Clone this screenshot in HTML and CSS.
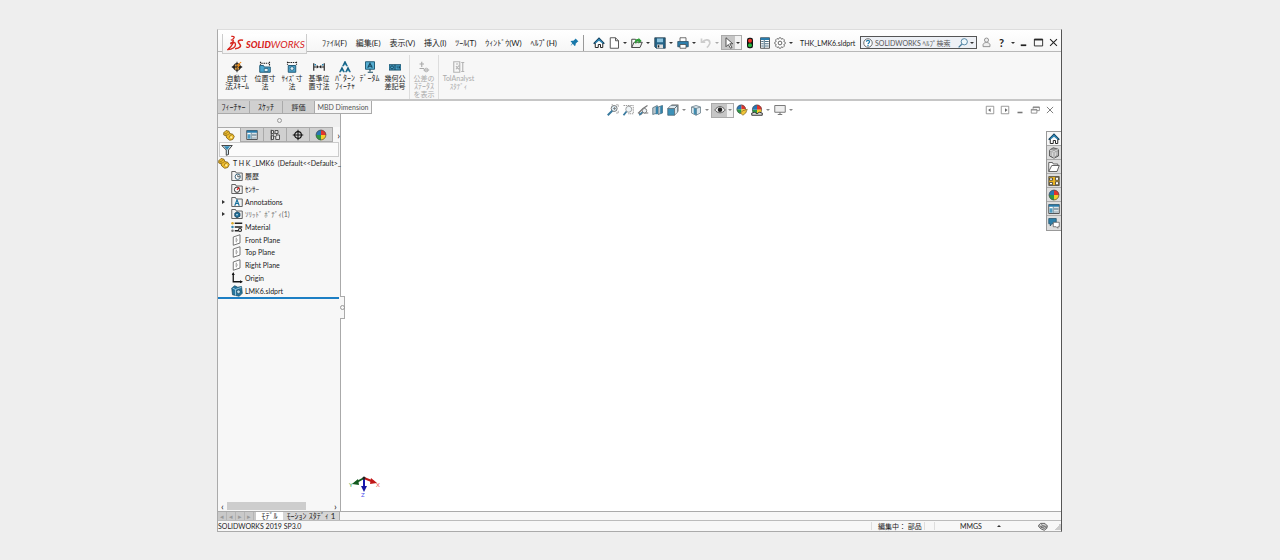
FILE: index.html
```html
<!DOCTYPE html>
<html lang="ja">
<head>
<meta charset="utf-8">
<title>SOLIDWORKS - THK_LMK6.sldprt</title>
<link rel="stylesheet" href="styles.css">
</head>
<body>
<svg class="defs" aria-hidden="true">
  <symbol id="home" viewBox="0 0 16 16"><path d="M3 8v6h4v-4h3v4h3V8" fill="#fff" stroke="#222" stroke-width="1.3"/><path d="M1 9l7-7 7 7" fill="none" stroke="#123f5c" stroke-width="2.2"/><path d="M3 7l5-5 5 5v2L8 5 3 9z" fill="#2d86b5"/></symbol>
  <symbol id="doc" viewBox="0 0 16 16"><path d="M3 1h7l4 4v10H3zM10 1v4h4" fill="#fff" stroke="#555" stroke-width="1.3"/></symbol>
  <symbol id="open" viewBox="0 0 16 16"><path d="M1 14V3h5l1 2h5v3" fill="#fff" stroke="#444" stroke-width="1.3"/><path d="M1 14l3-7h11l-3 7z" fill="#eee" stroke="#444" stroke-width="1.3"/><path d="M5 8c0-4 2-6 5-5V1l4 4-4 4V6C8 5 7 6 7 9z" fill="#2c9c36"/></symbol>
  <symbol id="folder" viewBox="0 0 16 16"><path d="M1 14V2h5l1 2h6v3" fill="#fff" stroke="#555" stroke-width="1.2"/><path d="M1 14l4-8h10l-3 8z" fill="#fff" stroke="#555" stroke-width="1.2"/></symbol>
  <symbol id="save" viewBox="0 0 16 16"><path d="M1 1h14v14H3l-2-2z" fill="#246387" stroke="#263b4a"/><path d="M4 2h8v5H4z" fill="#8ec4df"/><path d="M4 10h8v5H4z" fill="#ddd"/><path d="M5 11h2v3H5z" fill="#222"/></symbol>
  <symbol id="print" viewBox="0 0 16 16"><path d="M4 6V1h8v5" fill="#fff" stroke="#444"/><path d="M1 6h14v7H1z" fill="#2e7eab" stroke="#244a60"/><path d="M4 10h8v5H4z" fill="#fff" stroke="#444"/></symbol>
  <symbol id="undo" viewBox="0 0 16 16"><path d="M2 2v5h5M3 7c4-5 11-4 10 2-1 2-2 4-4 5" fill="none" stroke="#ccc" stroke-width="2.2"/></symbol>
  <symbol id="cursor" viewBox="0 0 16 16"><path d="M4 1v12l3-3 3 5 2-1-3-5h4z" fill="#fff" stroke="#444" stroke-width="1.2"/></symbol>
  <symbol id="light" viewBox="0 0 16 16"><rect x="4" y="1" width="8" height="14" rx="3" fill="#111"/><circle cx="8" cy="5" r="2.7" fill="#ee3527"/><circle cx="8" cy="11" r="2.7" fill="#24b33c"/></symbol>
  <symbol id="list" viewBox="0 0 16 16"><path d="M2 1h12v14H2z" fill="#fff" stroke="#444" stroke-width="1.2"/><path d="M2 1h12v3H2z" fill="#287bab"/><path d="M3 6h3M3 9h3M3 12h3M8 6h5M8 9h5M8 12h5M7 4v11" stroke="#3b6075" stroke-width="1.2"/></symbol>
  <symbol id="table" viewBox="0 0 16 16"><path d="M1 2h14v12H1z" fill="#fff" stroke="#444" stroke-width="1.2"/><path d="M1 2h14v3H1z" fill="#287bab"/><path d="M2 7h4v6H2z" fill="#4d9cc2"/><path d="M8 7h6M8 9h6M8 12h6M7 5v9" stroke="#3b6075"/></symbol>
  <symbol id="gear" viewBox="0 0 16 16"><path d="M7 1h2l1 2 2-1 2 2-1 2 2 1v2l-2 1 1 2-2 2-2-1-1 2H7l-1-2-2 1-2-2 1-2-2-1V7l2-1-1-2 2-2 2 1z" fill="#fff" stroke="#666" stroke-width="1.2"/><circle cx="8" cy="8" r="2.5" fill="none" stroke="#555" stroke-width="1.2"/></symbol>
  <symbol id="pin" viewBox="0 0 16 16"><path d="M10 1l5 5-2 1-3 3v3l-2 1-3-4-4 4 3-5-3-3 2-1h3l3-3z" fill="#1878aa"/></symbol>
  <symbol id="lens" viewBox="0 0 16 16"><circle cx="10" cy="6" r="5" fill="#eef7fb" stroke="#43799c" stroke-width="1.4"/><path d="M6 10l-5 5" stroke="#43799c" stroke-width="2"/></symbol>
  <symbol id="help" viewBox="0 0 16 16"><circle cx="8" cy="8" r="6.8" fill="#fff" stroke="#444" stroke-width="1.2"/><path d="M5.5 6c0-3 5-3 5 0 0 2-2.500 1.700-2.500 4M8 11.200v1.800" fill="none" stroke="#1c79ab" stroke-width="1.900"/></symbol>
  <symbol id="person" viewBox="0 0 16 16"><circle cx="8" cy="4.500" r="3" fill="#eee" stroke="#888" stroke-width="1.300"/><path d="M3 14V11c1-4 9-4 10 0v3z" fill="#eee" stroke="#888" stroke-width="1.300"/></symbol>
  <symbol id="min" viewBox="0 0 16 16"><path d="M4 12h8" stroke="currentColor" stroke-width="2.500"/></symbol>
  <symbol id="max" viewBox="0 0 16 16"><path d="M2 3h12v10H2z" fill="none" stroke="currentColor" stroke-width="1.300"/><path d="M2 4h12" stroke="currentColor" stroke-width="2"/></symbol>
  <symbol id="close" viewBox="0 0 16 16"><path d="M3 3l10 10M13 3L3 13" stroke="currentColor" stroke-width="1.500"/></symbol>
  <symbol id="restore" viewBox="0 0 16 16"><path d="M5 6V3h10v6h-4M2 7h9v6H2zM2 8h9M5 4h10" fill="none" stroke="currentColor" stroke-width="1.200"/></symbol>
  <symbol id="pleft" viewBox="0 0 16 16"><path d="M2 2h12v12H2z" fill="none" stroke="#888" stroke-width="1.300"/><path d="M9 5v6L5 8z" fill="#666"/></symbol>
  <symbol id="pright" viewBox="0 0 16 16"><path d="M2 2h12v12H2z" fill="none" stroke="#888" stroke-width="1.300"/><path d="M8 5v6l4-3z" fill="#666"/></symbol>
  <symbol id="auto" viewBox="0 0 16 16"><circle cx="8" cy="8" r="4.500" fill="#f0b052" stroke="#333" stroke-width="1.400"/><path d="M8 1v14M1 8h14M2 8l3-2v4zM14 8l-3-2v4z" fill="#222" stroke="#222" stroke-width="1.300"/><path d="M13 1L7 6h3l-4 6 7-7h-3l4-3z" fill="#f28a12"/></symbol>
  <symbol id="loc" viewBox="0 0 16 16"><path d="M1 6h5l1 2h8v7H1z" fill="#4aa7d0" stroke="#245a77" stroke-width="1.300"/><path d="M7 10h5v4H7z" fill="#d9eef7" stroke="#245a77"/><path d="M2 1v4M14 1v6M3 3h10" stroke="#222" stroke-width="1.500" stroke-dasharray="2 1"/></symbol>
  <symbol id="size" viewBox="0 0 16 16"><path d="M3 6h10v9H3z" fill="#489fc6" stroke="#245a77" stroke-width="1.300"/><circle cx="8" cy="10" r="2.500" fill="#d9eef7" stroke="#245a77"/><path d="M2 1v4M14 1v4M3 2h10" stroke="#222" stroke-width="1.500" stroke-dasharray="2 1"/></symbol>
  <symbol id="base" viewBox="0 0 16 16"><path d="M1 3v10M15 3v10M1 8h4M11 8h4" stroke="#222" stroke-width="1.500"/><path d="M5 5v5l3-2zM11 5v5L8 8z" fill="#222"/><path d="M2 5h2M12 5h2" stroke="#2684b2" stroke-width="2"/></symbol>
  <symbol id="pattern" viewBox="0 0 16 16"><path d="M5 7l3-6 3 6M1 15l3-6 3 6M9 15l3-6 3 6" fill="none" stroke="#176285" stroke-width="1.800"/><path d="M6 5h4M2 13h4M10 13h4" stroke="#17779f" stroke-width="1.500"/></symbol>
  <symbol id="datum" viewBox="0 0 16 16"><path d="M2 1h12v10H2z" fill="#56afd3" stroke="#205b76" stroke-width="1.300"/><path d="M5 9l3-6 3 6M6 7h5M8 11v3M5 15h7z" fill="none" stroke="#164961" stroke-width="1.500"/></symbol>
  <symbol id="geo" viewBox="0 0 16 16"><path d="M0 5h16v7H0z" fill="#48a2ca" stroke="#164c66" stroke-width="1.400"/><circle cx="4" cy="8.500" r="2" fill="none" stroke="#174459" stroke-width="1.300"/><path d="M8 5v7M10 8h1M12 7v3M14 7v3" stroke="#164259" stroke-width="1.300"/></symbol>
  <symbol id="tol" viewBox="0 0 16 16"><path d="M5 1v7M2 4h6M2 10h6" stroke="#aaa" stroke-width="1.500"/><circle cx="11" cy="12" r="2.500" fill="#ddd" stroke="#aaa"/><path d="M7 12h8" stroke="#aaa"/></symbol>
  <symbol id="tola" viewBox="0 0 16 16"><path d="M1 1h8v14H1zM11 2h4M13 2v12M11 14h4M4 4h3M4 7l4 4M4 11l4-5" fill="none" stroke="#b4b4b4" stroke-width="1.500"/></symbol>
  <symbol id="zoomfit" viewBox="0 0 16 16"><path d="M6 1h2M12 1h3v3M15 9v3h-3" fill="none" stroke="#999"/><circle cx="9.500" cy="6" r="4" fill="#dcecf4" stroke="#777" stroke-width="1.300"/><path d="M7 9l-6 6" stroke="#38799e" stroke-width="2.600"/><path d="M8 6h4M10 4v4" stroke="#777"/></symbol>
  <symbol id="zoomarea" viewBox="0 0 16 16"><path d="M2 2h13v11H8" fill="none" stroke="#777" stroke-dasharray="2 1"/><circle cx="9" cy="7" r="4" fill="#eef4f7" stroke="#888"/><path d="M6 10l-4 5" stroke="#38799e" stroke-width="2.400"/></symbol>
  <symbol id="prev" viewBox="0 0 16 16"><path d="M14 2L8 6l-6 6 3 2 4-4M9 12h6" fill="#e8eef2" stroke="#777" stroke-width="1.600"/><circle cx="10" cy="9" r="3" fill="#edf3f6" stroke="#777" stroke-width="1.200"/><path d="M7 11l-4 4" stroke="#397ca1" stroke-width="2"/></symbol>
  <symbol id="section" viewBox="0 0 16 16"><path d="M1 5l6-3v10l-6 2zM8 4l6-2v10l-6 2z" fill="#b9c6cd" stroke="#4d6470"/><path d="M5 4l3-1v10l-3 1zM11 3l3-1v10l-3 1z" fill="#3483aa"/></symbol>
  <symbol id="cube" viewBox="0 0 16 16"><path d="M2 4l6-2 6 2v8l-6 3-6-3z" fill="#dce7ed" stroke="#788b96" stroke-width="1.200"/><path d="M5 5l4 1v9l-4-2z" fill="#3c91b8"/><path d="M8 6l6-2M8 6v9M2 4l6 2" stroke="#667984"/></symbol>
  <symbol id="views" viewBox="0 0 16 16"><path d="M1 6h9v9H1z" fill="#3c91b8" stroke="#446172"/><path d="M1 6l4-4h9l-4 4zM10 6l4-4v9l-4 4z" fill="#dce7ed" stroke="#566974"/><path d="M6 1h9v9" fill="none" stroke="#777"/></symbol>
  <symbol id="eye" viewBox="0 0 16 16"><path d="M1 8c4-6 10-6 14 0-4 5-10 5-14 0z" fill="#eee" stroke="#555" stroke-width="1.200"/><circle cx="8" cy="7.500" r="3" fill="#222"/></symbol>
  <symbol id="ball" viewBox="0 0 16 16"><path d="M8 8V1A7 7 0 0 1 15 8z" fill="#e3342b"/><path d="M8 8h7A7 7 0 0 1 8 15z" fill="#f5ce28"/><path d="M8 8v7A7 7 0 0 1 1 8z" fill="#2c9946"/><path d="M8 8H1A7 7 0 0 1 8 1z" fill="#2877b4"/><circle cx="8" cy="8" r="6.500" fill="none" stroke="#555"/></symbol>
  <symbol id="appear" viewBox="0 0 16 16"><use href="#ball" width="14" height="14"/><path d="M6 12l3-3 6-2-2 5-4 3z" fill="#f1c638" stroke="#896e32"/></symbol>
  <symbol id="scene" viewBox="0 0 16 16"><use href="#ball" width="16" height="15"/><path d="M1 15v-3l4-1 3 2 3-2 4 1v3z" fill="#ddd" stroke="#333" stroke-width="1.300"/></symbol>
  <symbol id="monitor" viewBox="0 0 16 16"><path d="M1 2h14v9H1z" fill="#eee" stroke="#777" stroke-width="1.300"/><path d="M8 11v3M5 14h6" stroke="#777" stroke-width="1.500"/></symbol>
  <symbol id="part" viewBox="0 0 16 16"><path d="M1 5l3-3 4 1 1 3 4 1 2 3-2 4-4 1-4-3-1-3-3-1z" fill="#f1bd2b" stroke="#86671c" stroke-width="1.200"/><path d="M1 5l3 1 4-3M4 6v3l5-3M8 12l1-3 4-2" fill="none" stroke="#9a7921"/><circle cx="11" cy="11" r="1.500" fill="#fff0aa"/></symbol>
  <symbol id="config" viewBox="0 0 16 16"><path d="M3 2h3v4H3zM3 1v14M3 9h3v5H3zM8 2h4v4H8zM9 8h5v6H9z" fill="#e6e6e6" stroke="#444" stroke-width="1.200"/><circle cx="8" cy="8" r="2" fill="#fff" stroke="#444"/></symbol>
  <symbol id="target" viewBox="0 0 16 16"><circle cx="8" cy="8" r="4.500" fill="none" stroke="#111" stroke-width="1.500"/><path d="M8 1v14M1 8h14" stroke="#111" stroke-width="1.400"/></symbol>
  <symbol id="filter" viewBox="0 0 16 16"><path d="M1 2h14l-5 6v6l-3 1V8z" fill="#d2e6ef" stroke="#333" stroke-width="1.200"/><path d="M4 3h8L8 8z" fill="#3289b4"/></symbol>
  <symbol id="tfolder" viewBox="0 0 16 16"><path d="M1 14V2h5l1 2h8v10z" fill="#f3f3f3" stroke="#555" stroke-width="1.200"/></symbol>
  <symbol id="history" viewBox="0 0 16 16"><use href="#tfolder"/><circle cx="9" cy="9" r="3.500" fill="#fff" stroke="#3c657a" stroke-width="1.300"/><path d="M9 7v2h3" fill="none" stroke="#222"/></symbol>
  <symbol id="sensor" viewBox="0 0 16 16"><use href="#tfolder"/><circle cx="8" cy="9" r="3.500" fill="#fff" stroke="#333" stroke-width="1.300"/><path d="M8 9l3-3" stroke="#d22" stroke-width="1.800"/></symbol>
  <symbol id="annot" viewBox="0 0 16 16"><use href="#tfolder"/><path d="M5 13l3-8 3 8M6 10h4" fill="none" stroke="#16719e" stroke-width="1.500"/></symbol>
  <symbol id="solid" viewBox="0 0 16 16"><use href="#tfolder"/><path d="M5 7l3-2 4 2v4l-4 2-3-2z" fill="#1e6e98" stroke="#173e55"/><circle cx="8" cy="9" r="1" fill="#fff"/></symbol>
  <symbol id="material" viewBox="0 0 16 16"><path d="M5 3h10M5 8h10M5 13h5" stroke="#222" stroke-width="1.700"/><circle cx="2" cy="3" r="1.700" fill="#d8a72a"/><circle cx="2" cy="8" r="1.700" fill="#3287b2"/><circle cx="2" cy="13" r="1.700" fill="#777"/><circle cx="12" cy="12" r="2" fill="#fff" stroke="#222" stroke-width="1.500"/></symbol>
  <symbol id="plane" viewBox="0 0 16 16"><path d="M3 4l9-3v11l-9 3z" fill="#fff" stroke="#666" stroke-width="1.200"/><path d="M7 5v2M7 9v2M6 8h3" stroke="#666"/></symbol>
  <symbol id="origin" viewBox="0 0 16 16"><path d="M3 2v11h11" fill="none" stroke="#111" stroke-width="1.700"/><path d="M1 4l2-4 2 4zM12 11l4 2-4 2z" fill="#111"/></symbol>
  <symbol id="body" viewBox="0 0 16 16"><path d="M1 4l4-3 4 2 5-1 1 9-4 4-9-2z" fill="#26769f" stroke="#174c66"/><path d="M2 4l4 2 8-3M6 6v8" stroke="#b4dced" fill="none"/><circle cx="10" cy="9" r="2.500" fill="#bbddeb" stroke="#164158"/></symbol>
  <symbol id="library" viewBox="0 0 16 16"><path d="M2 4l5-3 7 2v9l-6 3-6-3z" fill="#999" stroke="#444"/><path d="M2 4l6 2 6-3M8 6v9M4 6v6M6 7v6M10 7v5M12 6v5" stroke="#eee" fill="none"/></symbol>
  <symbol id="palette" viewBox="0 0 16 16"><path d="M1 2h14v12H1z" fill="#e9b322" stroke="#444"/><path d="M2 4h4v3H2zM10 3h4v4h-4zM2 10h4v3H2zM10 9h4v4h-4z" fill="#fff" stroke="#333"/></symbol>
  <symbol id="forum" viewBox="0 0 16 16"><path d="M1 2h10v7H5l-2 3V9H1z" fill="#2c80aa" stroke="#23526b"/><path d="M7 7h8v6h-2v2l-2-2H7z" fill="#fff" stroke="#555"/></symbol>
  <symbol id="chip" viewBox="0 0 16 14"><path d="M1 5l3-3h7l4 4-1 4-4 3-5-2-4-4z" fill="#ddd" stroke="#444" stroke-width="1.300"/><path d="M2 6l6 2 6-2M4 8l6 2 4-2M5 4l4 2 2-2" fill="none" stroke="#555" stroke-width="1.300"/></symbol>
</svg>

<div class="window">
  <header class="titlebar">
    <div class="brand">
      <svg class="ds" viewBox="0 0 36 34" aria-hidden="true"><path d="M9 3c6-1 9 1 3 6M8 11c8-2 7 4-1 6" fill="none" stroke="#d8241d" stroke-width="2.600"/><path d="M15 14C11 21 7 27 2 31c9 0 16-5 16-11 0-5-5-6-11-1" fill="none" stroke="#d8241d" stroke-width="2.800"/><path d="M34 11c-8-2-13 2-8 7 6 6 1 11-9 11" fill="none" stroke="#d8241d" stroke-width="3.200"/></svg>
      <span><b>SOLID</b><i>WORKS</i></span>
    </div>
    <nav class="menus">
      <button>ﾌｧｲﾙ(F)</button><button>編集(E)</button><button>表示(V)</button><button>挿入(I)</button><button>ﾂｰﾙ(T)</button><button>ｳｨﾝﾄﾞｳ(W)</button><button>ﾍﾙﾌﾟ(H)</button>
    </nav>
    <button class="pin" aria-label="Pin"><svg><use href="#pin"/></svg></button>
    <div class="quick">
      <button aria-label="Home"><svg><use href="#home"/></svg></button>
      <button aria-label="New"><svg><use href="#doc"/></svg></button><button class="drop" aria-label="New options"></button>
      <button aria-label="Open"><svg><use href="#open"/></svg></button><button class="drop" aria-label="Open options"></button>
      <button aria-label="Save"><svg><use href="#save"/></svg></button><button class="drop" aria-label="Save options"></button>
      <button aria-label="Print"><svg><use href="#print"/></svg></button><button class="drop" aria-label="Print options"></button>
      <button aria-label="Undo"><svg><use href="#undo"/></svg></button><button class="drop faint" aria-label="Undo options"></button>
      <span class="picked"><button aria-label="Select"><svg><use href="#cursor"/></svg></button><button class="drop" aria-label="Select options"></button></span>
      <button aria-label="Rebuild"><svg><use href="#light"/></svg></button>
      <button aria-label="File properties"><svg><use href="#list"/></svg></button>
      <button aria-label="Options"><svg><use href="#gear"/></svg></button><button class="drop" aria-label="More options"></button>
    </div>
    <span class="filename">THK_LMK6.sldprt</span>
    <div class="search"><svg><use href="#help"/></svg><input type="text" aria-label="Search help" placeholder="SOLIDWORKS ﾍﾙﾌﾟ検索"><button aria-label="Search"><svg><use href="#lens"/></svg></button><button class="drop" aria-label="Search options"></button></div>
    <div class="winbtns">
      <button aria-label="Log in"><svg><use href="#person"/></svg></button>
      <button class="question">?</button><button class="drop" aria-label="Help options"></button>
      <button aria-label="Minimize"><svg><use href="#min"/></svg></button>
      <button aria-label="Maximize"><svg><use href="#max"/></svg></button>
      <button aria-label="Close"><svg><use href="#close"/></svg></button>
    </div>
  </header>

  <section class="ribbon">
    <button><svg><use href="#auto"/></svg><span>自動寸</span><span class="kana">法ｽｷｰﾑ</span></button>
    <button><svg><use href="#loc"/></svg><span>位置寸</span><span>法</span></button>
    <button><svg><use href="#size"/></svg><span>ｻｲｽﾞ寸</span><span>法</span></button>
    <button><svg><use href="#base"/></svg><span>基準位</span><span>置寸法</span></button>
    <button><svg><use href="#pattern"/></svg><span class="kana">ﾊﾟﾀｰﾝ</span><span class="kana">ﾌｨｰﾁｬ</span></button>
    <button><svg><use href="#datum"/></svg><span class="kana">ﾃﾞｰﾀﾑ</span></button>
    <button><svg><use href="#geo"/></svg><span>幾何公</span><span>差記号</span></button>
    <button class="off"><svg><use href="#tol"/></svg><span>公差の</span><span class="kana">ｽﾃｰﾀｽ</span><span>を表示</span></button>
    <button class="off"><svg><use href="#tola"/></svg><span>TolAnalyst</span><span>ｽﾀﾃﾞｨ</span></button>
  </section>

  <main class="work">
    <aside class="side">
      <nav class="cmdtabs"><button class="kana">ﾌｨｰﾁｬｰ</button><button class="kana">ｽｹｯﾁ</button><button>評価</button><button class="on">MBD Dimension</button></nav>
      <div class="grip"></div>
      <nav class="paneltabs">
        <button class="on" aria-label="Feature tree"><svg><use href="#part"/></svg></button>
        <button aria-label="Properties"><svg><use href="#table"/></svg></button>
        <button aria-label="Configurations"><svg><use href="#config"/></svg></button>
        <button aria-label="DimXpert"><svg><use href="#target"/></svg></button>
        <button aria-label="Display"><svg><use href="#ball"/></svg></button>
        <button class="more" aria-label="More tabs">›</button>
      </nav>
      <label class="filter"><svg><use href="#filter"/></svg><input type="text" aria-label="Filter tree"></label>
      <ul class="tree">
        <li class="root"><svg><use href="#part"/></svg>T H K _LMK6&nbsp; (Default&lt;&lt;Default&gt;_</li>
        <li><svg><use href="#history"/></svg>履歴</li>
        <li><svg><use href="#sensor"/></svg>ｾﾝｻｰ</li>
        <li class="branch"><svg><use href="#annot"/></svg>Annotations</li>
        <li class="branch"><svg><use href="#solid"/></svg><span class="soft">ｿﾘｯﾄﾞ ﾎﾞﾃﾞｨ(1)</span></li>
        <li><svg><use href="#material"/></svg>Material</li>
        <li><svg><use href="#plane"/></svg>Front Plane</li>
        <li><svg><use href="#plane"/></svg>Top Plane</li>
        <li><svg><use href="#plane"/></svg>Right Plane</li>
        <li><svg><use href="#origin"/></svg>Origin</li>
        <li><svg><use href="#body"/></svg>LMK6.sldprt</li>
      </ul>
      <div class="rollback"></div>
      <div class="hscroll"><button aria-label="Scroll left">‹</button><span></span><button aria-label="Scroll right">›</button></div>
      <button class="splitter" aria-label="Collapse panel"></button>
    </aside>
    <section class="viewport">
      <div class="viewbar">
        <div class="headsup">
          <button aria-label="Zoom to fit"><svg><use href="#zoomfit"/></svg></button>
          <button aria-label="Zoom to area"><svg><use href="#zoomarea"/></svg></button>
          <button aria-label="Previous view"><svg><use href="#prev"/></svg></button>
          <button aria-label="Section view"><svg><use href="#section"/></svg></button>
          <button aria-label="View orientation"><svg><use href="#views"/></svg></button><button class="drop" aria-label="Orientation options"></button>
          <button aria-label="Display style"><svg><use href="#cube"/></svg></button><button class="drop" aria-label="Style options"></button>
          <span class="picked"><button aria-label="Hide or show"><svg><use href="#eye"/></svg></button><button class="drop" aria-label="Visibility options"></button></span>
          <button aria-label="Edit appearance"><svg><use href="#appear"/></svg></button>
          <button aria-label="Apply scene"><svg><use href="#scene"/></svg></button><button class="drop" aria-label="Scene options"></button>
          <button aria-label="View settings"><svg><use href="#monitor"/></svg></button><button class="drop" aria-label="View options"></button>
        </div>
        <div class="docbtns">
          <button aria-label="Left pane"><svg><use href="#pleft"/></svg></button><button aria-label="Right pane"><svg><use href="#pright"/></svg></button><button aria-label="Minimize document"><svg><use href="#min"/></svg></button><button aria-label="Restore document"><svg><use href="#restore"/></svg></button><button aria-label="Close document"><svg><use href="#close"/></svg></button>
        </div>
      </div>
      <nav class="taskpane">
        <button aria-label="Resources"><svg><use href="#home"/></svg></button><button aria-label="Design library"><svg><use href="#library"/></svg></button><button aria-label="File explorer"><svg><use href="#folder"/></svg></button><button aria-label="View palette"><svg><use href="#palette"/></svg></button><button aria-label="Appearances"><svg><use href="#ball"/></svg></button><button aria-label="Custom properties"><svg><use href="#table"/></svg></button><button aria-label="Forum"><svg><use href="#forum"/></svg></button>
      </nav>
      <svg class="triad" viewBox="0 0 32 24" aria-label="Axes">
        <path d="M15 3v12" stroke="#1818b0" stroke-width="2"/><path d="M12 11h6l-3 6z" fill="#1414a0"/>
        <path d="M15 3l10 4" stroke="#c01818" stroke-width="2"/><path d="M22 3l6 5-7 1z" fill="#c01818"/>
        <path d="M15 3L6 8" stroke="#145c20" stroke-width="2"/><path d="M9 4L3 9l7 1z" fill="#145c20"/>
        <circle cx="15" cy="3" r="1.500" fill="#222"/>
        <text x="0" y="12" fill="#2f9e3a">Y</text><text x="27" y="12" fill="#f05050">X</text><text x="12" y="22" fill="#5050ee">Z</text>
      </svg>
    </section>
  </main>

  <nav class="bottomtabs">
    <span class="steps"><button aria-label="First">◂</button><button aria-label="Previous">◂</button><button aria-label="Next">▸</button><button aria-label="Last">▸</button></span>
    <button class="on kana">ﾓﾃﾞﾙ</button><button class="tab kana">ﾓｰｼｮﾝ ｽﾀﾃﾞｨ 1</button>
  </nav>
  <footer class="status">
    <span class="version">SOLIDWORKS 2019 SP3.0</span>
    <span class="editing">編集中： 部品</span>
    <button class="units"><span>MMGS</span><span class="up"></span></button>
    <button class="tag" aria-label="Tags"><svg><use href="#chip"/></svg></button>
    <span class="corner"></span>
  </footer>
</div>
</body>
</html>
```
FILE: styles.css
```css
* { box-sizing: border-box; }
body {
  margin: 0;
  min-height: 100vh;
  display: flex;
  padding: 29px 218px 28px 217px;
  background: #eee;
  color: #222;
  font: 7px/8px Lato, "Noto Sans CJK JP", sans-serif;
}
button, input {
  margin: 0;
  padding: 0;
  border: 0;
  background: none;
  color: inherit;
  font: inherit;
}
button { flex: none; white-space: nowrap; }
svg { display: block; width: 12px; height: 12px; flex: none; }
.defs { position: absolute; width: 0; height: 0; }
.kana { font-size: 8px; }

.window {
  flex: 1;
  min-width: 0;
  display: flex;
  flex-direction: column;
  background: #f7f7f7;
  border: 1px solid #aaa;
  border-top-color: #ddd;
  border-right-color: #555;
}

.titlebar {
  display: flex;
  align-items: center;
  height: 22px;
  padding-top: 4px;
  border-bottom: 1px solid #b8b8b8;
  background: linear-gradient(#fff, #f6f6f6);
  flex: none;
}
.brand {
  display: flex;
  align-items: center;
  align-self: flex-start;
  gap: 2px;
  position: relative;
  width: 85px;
  height: 20px;
  margin-left: 4px;
  padding: 0 0 2px 4px;
  border: 1px solid #ccc;
  border-top: 0;
  background: linear-gradient(#fff, #f2f2f2);
  color: #d8241d;
  font: 10px/12px Lato, sans-serif;
}
.brand span { padding-top: 4px; }
.brand b { font-size: 9px; font-weight: 900; font-style: italic; }
.ds { width: 17px; height: 16px; }
.menus { display: flex; justify-content: space-between; width: 235px; margin-left: 15px; font-size: 8px; }
.pin { width: 12px; margin-left: 11px; }
.pin svg { width: 9px; height: 9px; margin: 0 auto; }
.quick {
  display: flex;
  align-items: center;
  height: 16px;
  margin-left: 3px;
  padding-left: 7px;
  border-left: 1px solid #999;
}
.quick button, .headsup button { width: 15px; height: 15px; display: grid; place-items: center; }
.quick .drop, .headsup .drop, .drop { width: 8px; height: 11px; display: grid; place-items: center; }
.drop::before {
  content: "";
  border: 2px solid transparent;
  border-top-color: #333;
  border-bottom: 0;
}
.faint::before { border-top-color: #aaa; }
.picked { display: flex; height: 15px; border: 1px solid #aaa; background: #f2f2f2; align-items: center; }
.quick .picked button, .headsup .picked button { width: 13px; height: 13px; background: #c6c6c6; }
.quick .picked .drop, .headsup .picked .drop { width: 6px; background: none; }
.filename { margin-left: 5px; width: 60px; white-space: nowrap; }
.search {
  display: flex;
  align-items: center;
  width: 117px;
  height: 13px;
  padding-left: 2px;
  border: 1px solid #555;
  background: #edf0f5;
}
.search svg { width: 10px; height: 10px; }
.search input { flex: 1; min-width: 0; padding-left: 2px; outline: 0; }
.search input::placeholder { color: #555; opacity: 1; }
.winbtns { display: flex; align-items: center; margin-left: auto; }
.winbtns button { width: 15px; display: grid; place-items: center; }
.winbtns svg { width: 11px; height: 11px; }
.winbtns .drop { width: 7px; }
.winbtns .question { font-size: 11px; font-weight: 700; }

.ribbon {
  display: grid;
  grid-template-columns: 30px 26px 28px 26px 26px 23px 28px 29px 40px;
  align-content: start;
  height: 49px;
  padding: 3px 0 0 4px;
  border-bottom: 2px solid #c6c6c6;
  flex: none;
}
.ribbon button {
  display: flex;
  flex-direction: column;
  align-items: center;
  justify-content: flex-start;
  height: 44px;
  padding-top: 6px;
}
.ribbon svg { height: 12px; margin-bottom: 1px; }
.ribbon .off { color: #aaa; border-left: 1px solid #ddd; }

.work { flex: 1; min-height: 0; display: grid; grid-template-columns: 123px 1fr; }
.side {
  position: relative;
  z-index: 1;
  display: flex;
  flex-direction: column;
  min-width: 0;
  border-right: 1px solid #aaa;
}
.cmdtabs { display: grid; grid-template-columns: 32px 33px 32px 57px; height: 13px; flex: none; }
.cmdtabs button { background: #d0d0d0; border: 1px solid #aaa; border-width: 0 1px 1px 0; }
.cmdtabs .on { background: #f7f7f7; color: #555; }
.grip { height: 13px; flex: none; display: grid; place-items: center; background: #efefef; }
.grip::before, .splitter::before { content: ""; width: 3px; height: 3px; border: 1px solid #999; border-radius: 50%; }
.paneltabs { display: grid; grid-template-columns: repeat(5, 23px) 1fr; height: 15px; flex: none; }
.paneltabs button { display: grid; place-items: center; background: #d0d0d0; border: 1px solid #aaa; border-left: 0; }
.paneltabs .on { background: #f7f7f7; border-bottom: 0; }
.paneltabs .more { background: none; border: 0; justify-items: end; font-size: 10px; }
.filter { display: flex; align-items: center; height: 15px; margin: 0 1px; padding-left: 1px; border: 1px solid #ccc; flex: none; background: #fbfbfb; }
.filter input { flex: 1; min-width: 0; outline: 0; }
.tree {
  display: grid;
  grid-template-rows: repeat(11, 1fr);
  height: 140px;
  margin: 0;
  padding: 0;
  list-style: none;
  flex: none;
}
.tree li { position: relative; display: flex; align-items: center; gap: 2px; padding-left: 13px; white-space: nowrap; }
.tree .root { padding-left: 0; gap: 3px; }
.branch::before { content: ""; position: absolute; left: 4px; border: 2px solid transparent; border-left: 3px solid #333; border-right: 0; }
.soft { color: #666; }
.rollback { height: 2px; margin-right: 1px; background: #1d7fc4; flex: none; }
.splitter {
  position: absolute;
  top: 195px;
  right: -5px;
  width: 5px;
  height: 23px;
  display: grid;
  place-items: center;
  border: 1px solid #aaa;
  border-left: 0;
  background: #f7f7f7;
}
.hscroll { display: grid; grid-template-columns: 9px 1fr 9px; align-items: center; height: 10px; margin-top: auto; }
.hscroll span { width: 79px; height: 8px; background: #cdcdcd; }
.hscroll button { font-size: 10px; }

.viewport { position: relative; background: #fff; min-width: 0; }
.viewbar { display: flex; align-items: center; padding: 0 4px 0 264px; height: 18px; }
.headsup { display: flex; align-items: center; }
.headsup .drop::before { border-top-color: #888; }
.headsup .picked button { width: 15px; }
.headsup .picked .drop { width: 6px; }
.docbtns { display: flex; margin-left: auto; color: #777; }
.docbtns button { width: 15px; display: grid; place-items: center; }
.docbtns svg { width: 10px; height: 10px; }
.taskpane { position: absolute; top: 30px; right: 0; display: grid; width: 15px; border: 1px solid #999; border-right: 0; background: #ddd; }
.taskpane button { display: grid; place-items: center; height: 14px; border-bottom: 1px solid #aaa; }
.taskpane button:first-child { background: #f7f7f7; }
.taskpane button:last-child { border-bottom: 0; }
.triad { position: absolute; left: 8px; bottom: 12px; width: 32px; height: 24px; overflow: visible; }
.triad text { font-size: 6px; }

.bottomtabs { display: flex; height: 9px; border-top: 1px solid #aaa; flex: none; }
.steps { display: grid; grid-template-columns: repeat(4, 9px); width: 38px; background: #c9c9c9; color: #999; }
.steps button { border-right: 1px solid #b5b5b5; }
.bottomtabs .on { width: 27px; background: #fff; }
.bottomtabs .tab { width: 57px; background: #d6d6d6; border-right: 1px solid #aaa; }
.status { display: flex; align-items: center; height: 11px; border-top: 1px solid #bbb; flex: none; }
.version { flex: 1; white-space: nowrap; }
.editing { width: 54px; padding-left: 6px; border: 1px solid #ddd; border-width: 0 1px; white-space: nowrap; }
.units { display: flex; align-items: center; justify-content: space-between; width: 67px; padding-left: 25px; margin-left: 9px; border-left: 1px solid #ddd; }
.up { border: 2px solid transparent; border-top: 0; border-bottom-color: #333; }
.tag { margin-left: 37px; }
.tag svg { width: 10px; height: 9px; }
.corner { width: 7px; height: 7px; margin-left: 6px; background: linear-gradient(135deg, transparent 50%, #ccc 50%); }
```
